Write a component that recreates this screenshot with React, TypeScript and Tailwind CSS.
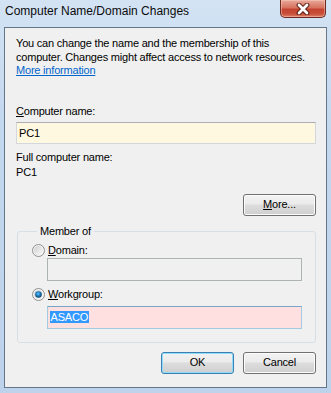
import React from 'react';

const font = "font-['Liberation_Sans',Arial,sans-serif]";

function Radio({ checked }: { checked?: boolean }) {
  return (
    <svg width="13" height="13" viewBox="0 0 13 13" className="shrink-0">
      <defs>
        <linearGradient id={checked ? 'rfc' : 'rfu'} x1="0" y1="0" x2="1" y2="1">
          <stop offset="0" stopColor="#cfcfcf" />
          <stop offset="1" stopColor="#fbfbfb" />
        </linearGradient>
        <radialGradient id="rdot" cx="0.45" cy="0.4" r="0.6">
          <stop offset="0" stopColor="#5fc4ff" />
          <stop offset="0.55" stopColor="#1b78b8" />
          <stop offset="1" stopColor="#0b3f66" />
        </radialGradient>
      </defs>
      <circle cx="6.5" cy="6.5" r="6" fill="#f4f4f4" stroke="#8e8f8f" strokeWidth="1" />
      <circle cx="6.5" cy="6.5" r="4.6" fill={`url(#${checked ? 'rfc' : 'rfu'})`} />
      {checked && <circle cx="6.5" cy="6.5" r="3.3" fill="url(#rdot)" />}
    </svg>
  );
}

function Button({ children, primary }: { children: React.ReactNode; primary?: boolean }) {
  return (
    <button
      className={`w-[73px] h-[22px] rounded-[3px] border text-[11px] tracking-[-0.2px] text-black flex items-center justify-center bg-[linear-gradient(to_bottom,#f2f2f2_0%,#ebebeb_45%,#dddddd_50%,#cfcfcf_100%)] ${
        primary ? 'border-[#3c7fb1] shadow-[inset_0_0_0_1px_#8fdcfa]' : 'border-[#707070] shadow-[inset_0_0_0_1px_#fcfcfc]'
      }`}
    >
      {children}
    </button>
  );
}

export default function App() {
  return (
    <div className={`w-[331px] h-[393px] overflow-hidden text-black ${font} bg-[linear-gradient(to_bottom,#d3e3f4_0%,#c4d8ee_30%,#bcd3eb_100%)]`}>
      {/* title bar */}
      <div className="h-[27px] flex items-start justify-between">
        <span className="pl-[5px] pt-[4px] text-[12px] leading-[15px] text-[#0b0b0b]">Computer Name/Domain Changes</span>
        <div className="mr-[5px] w-[46px] h-[18px] rounded-b-[5px] border border-t-0 border-[#6b2a22] bg-[linear-gradient(to_bottom,#e9a99b_0%,#d7735f_45%,#c4432f_55%,#c8503a_80%,#dd7c62_100%)] shadow-[inset_0_0_0_1px_rgba(255,210,200,0.45)] flex items-center justify-center">
          <svg width="14" height="12" viewBox="0 0 14 12">
            <path d="M3 2 L11 10 M11 2 L3 10" stroke="#4a1a12" strokeOpacity="0.75" strokeWidth="5" strokeLinecap="round" />
            <path d="M3 2 L11 10 M11 2 L3 10" stroke="#ffffff" strokeWidth="2.6" strokeLinecap="round" />
          </svg>
        </div>
      </div>

      {/* client area */}
      <div className="ml-[4px] w-[323px] h-[361px] border border-[#66768a] bg-[#f0f0f0] pl-[11px] pr-[10px] pt-[9px] flex flex-col text-[11px] tracking-[-0.2px]">
        <p className="leading-[13.5px]">
          You can change the name and the membership of this
          <br />
          computer. Changes might affect access to network resources.
          <br />
          <span className="text-[#0066cc] underline">More information</span>
        </p>

        <div className="mt-[27px] leading-[13px]">
          <span className="underline">C</span>omputer name:
        </div>
        <div className="mt-[4px] h-[22px] w-full border border-[#d3d6dc] border-t-[#abadb3] bg-[#fff8e1] pl-[2px] leading-[20px]">PC1</div>

        <div className="mt-[6px] leading-[15px]">
          Full computer name:
          <br />
          PC1
        </div>

        <div className="mt-[14px] flex justify-end">
          <Button>
            <span className="underline">M</span>ore...
          </Button>
        </div>

        <fieldset className="mt-[9px] ml-[1px] border border-[#d5dfe5] rounded-[3px] pl-[14px] pr-[13px] pb-[13px]">
          <legend className="ml-[5px] px-[3px] leading-[13px]">Member of</legend>
          <div className="mt-[6px] flex items-center leading-[13px]">
            <Radio />
            <span className="ml-[3px]">
              <span className="underline">D</span>omain:
            </span>
          </div>
          <div className="mt-[1px] ml-[15px] h-[23px] border border-[#adb2b5] bg-[#f0f0f0]" />
          <div className="mt-[7px] flex items-center leading-[13px]">
            <Radio checked />
            <span className="ml-[3px]">
              <span className="underline">W</span>orkgroup:
            </span>
          </div>
          <div className="mt-[5px] ml-[15px] h-[23px] border border-[#a4c9e3] border-t-[#7aa3c9] bg-[#ffe0e0] pl-[2px] flex items-center">
            <span className="bg-[#3399ff] text-white leading-[12px] px-[0.5px]">ASACO</span>
          </div>
        </fieldset>

        <div className="mt-[9px] flex justify-end gap-[9px]">
          <Button primary>OK</Button>
          <Button>Cancel</Button>
        </div>
      </div>
    </div>
  );
}
